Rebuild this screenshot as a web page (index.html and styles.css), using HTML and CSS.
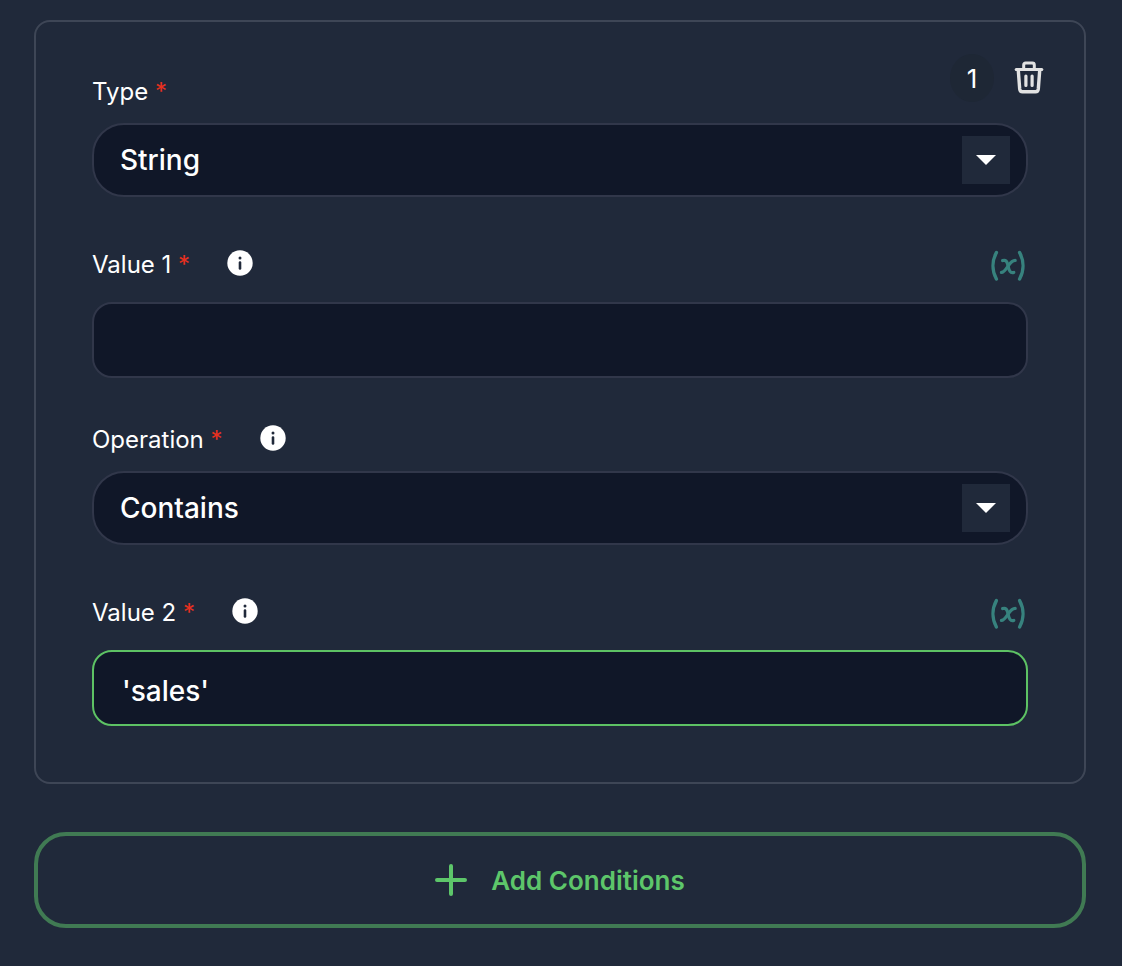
FILE: index.html
```html
<!DOCTYPE html>
<html lang="en">
<head>
  <meta charset="UTF-8">
  <meta name="viewport" content="width=device-width, initial-scale=1.0">
  <title>Conditions</title>
  <link rel="stylesheet" href="styles.css">
</head>
<body>
  <!-- shared icon shapes -->
  <svg class="sprite" aria-hidden="true">
    <symbol id="info" viewBox="0 0 26 26">
      <circle cx="13" cy="13" r="12.7" fill="#fff"/>
      <circle cx="13" cy="7.9" r="1.5" fill="#20293a"/>
      <path d="M13 12.6v5.8" stroke="#20293a" stroke-width="2.6" stroke-linecap="round"/>
    </symbol>
    <symbol id="variable" viewBox="0 0 36 32">
      <g fill="none" stroke="currentColor" stroke-width="3.4" stroke-linecap="round" stroke-linejoin="round">
        <path d="M6.4 2.6C1.900 10.800 1.900 20.800 6.400 29"/>
        <path d="M29.600 2.600c4.500 8.200 4.500 18.200 0 26.400"/>
        <path stroke-width="3.2" d="M12.600 10.600c3.200-1.200 4.600 1 5.500 5.400.9 4.600 2.300 7.600 5.700 6.400"/>
        <path stroke-width="3.200" d="M25.200 10.400c-2.800 0-4.600 2-7.100 5.600-2.500 3.800-4.200 6.400-6.700 6.400"/>
      </g>
    </symbol>
  </svg>

  <main>
    <form class="card">
      <div class="actions">
        <span class="badge">1</span>
        <button type="button" class="icon-btn" aria-label="Delete condition">
          <svg width="30" height="34" viewBox="0 0 30 34" fill="none" stroke="#e2e2e2" stroke-width="3.4" stroke-linejoin="round" stroke-linecap="round">
            <path stroke-width="3" d="M2.200 8.500h25.600"/>
            <path stroke-width="3" d="M9.700 7.500V3.900q0-1.900 1.900-1.900h6.800q1.900 0 1.900 1.900V7.500"/>
            <path d="M4.300 9.500l1.400 18.500q.3 2.700 2.800 2.700h13q2.500 0 2.800-2.700l1.400-18.500"/>
            <path stroke-width="3.200" d="M11.900 15v9.500M18.100 15v9.500"/>
          </svg>
        </button>
      </div>

      <div class="field">
        <div class="field-head">
          <label for="type">Type <span class="required">*</span></label>
        </div>
        <div class="select">
          <select id="type">
            <option>String</option>
          </select>
          <span class="arrow"></span>
        </div>
      </div>

      <div class="field text-field">
        <div class="field-head">
          <label for="value1">Value 1 <span class="required">*</span></label>
          <svg class="info"><use href="#info"/></svg>
          <button type="button" class="icon-btn variable" aria-label="Insert variable">
            <svg width="36" height="32"><use href="#variable"/></svg>
          </button>
        </div>
        <input type="text" id="value1">
      </div>

      <div class="field">
        <div class="field-head">
          <label for="operation">Operation <span class="required">*</span></label>
          <svg class="info"><use href="#info"/></svg>
        </div>
        <div class="select">
          <select id="operation">
            <option>Contains</option>
          </select>
          <span class="arrow"></span>
        </div>
      </div>

      <div class="field text-field">
        <div class="field-head">
          <label for="value2">Value 2 <span class="required">*</span></label>
          <svg class="info"><use href="#info"/></svg>
          <button type="button" class="icon-btn variable" aria-label="Insert variable">
            <svg width="36" height="32"><use href="#variable"/></svg>
          </button>
        </div>
        <input type="text" id="value2" class="active" value="'sales'">
      </div>
    </form>

    <button type="button" class="add-btn">
      <svg width="32" height="32" viewBox="0 0 32 32" stroke="currentColor" stroke-width="4" stroke-linecap="round">
        <path d="M16 2v28M2 16h28"/>
      </svg>
      Add Conditions
    </button>
  </main>
</body>
</html>
```

FILE: styles.css
```css
* {
  box-sizing: border-box;
}

body {
  margin: 0;
  background-color: #20293a;
  color: #fff;
  font-family: Inter, "Liberation Sans", sans-serif;
}

button,
input,
select {
  font-family: inherit;
}

svg {
  display: block;
  flex: none;
}

.sprite {
  position: absolute;
  width: 0;
  height: 0;
}

main {
  padding: 20px 36px 36px 34px;
}

.card {
  position: relative;
  padding: 51px 56px 56px;
  border: 2px solid #3e4656;
  border-radius: 16px;
}

/* sits over the top right corner of the card */
.actions {
  position: absolute;
  top: 32px;
  right: 40px;
  display: flex;
  align-items: center;
  gap: 20px;
}

.badge {
  width: 44px;
  height: 48px;
  border-radius: 50%;
  background-color: #1e2735;
  font-size: 26px;
  line-height: 50px;
  text-align: center;
}

.icon-btn {
  padding: 0;
  border: 0;
  background: none;
  cursor: pointer;
}

.field + .field {
  margin-top: 49px;
}

.text-field + .field {
  margin-top: 43px;
}

.field-head {
  display: flex;
  align-items: center;
  height: 36px;
  margin-bottom: 14px;
}

.text-field .field-head {
  margin-bottom: 20px;
}

label {
  padding-top: 2px;
  font-size: 24px;
  line-height: 36px;
}

.required {
  color: #e8301f;
}

.info {
  width: 26px;
  height: 26px;
  margin: 0 0 2px 37px;
}

.variable {
  margin-left: auto;
  padding: 4px 2px 0 0;
  color: #37827e;
}

.select {
  display: grid;
  align-items: center;
}

select,
input {
  width: 100%;
  border: 2px solid #31374a;
  background-color: #101728;
  color: #fff;
  font-size: 28px;
  font-weight: 500;
  outline: none;
}

select {
  grid-area: 1 / 1;
  height: 74px;
  padding: 0 80px 0 26px;
  border-radius: 32px;
  appearance: none;
}

.arrow {
  grid-area: 1 / 1;
  justify-self: end;
  display: grid;
  place-items: center;
  width: 48px;
  height: 48px;
  margin-right: 18px;
  background-color: #20293a;
  pointer-events: none;
}

.arrow::after {
  content: "";
  border: 10px solid transparent;
  border-top-color: #fff;
  border-bottom: 0;
}

input {
  display: block;
  height: 76px;
  padding: 6px 28px 0;
  border-radius: 20px;
}

input.active {
  border-color: #5dc264;
}

.add-btn {
  display: flex;
  align-items: center;
  justify-content: center;
  gap: 24px;
  width: 100%;
  height: 96px;
  margin-top: 48px;
  border: 4px solid #407a53;
  border-radius: 32px;
  background: none;
  color: #5dc66a;
  font-size: 26px;
  font-weight: 600;
  cursor: pointer;
}
```
